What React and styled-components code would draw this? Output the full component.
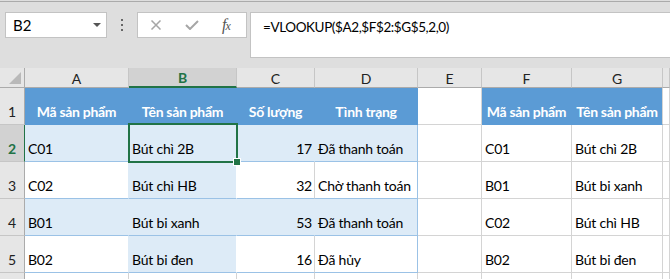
import React from 'react';
import styled, { createGlobalStyle } from 'styled-components';

const GlobalStyle = createGlobalStyle`
    body {
        margin: 0;
        background: #ffffff;
        overflow: hidden;
    }
`;

const FONT = `Lato, "Noto Sans", "Liberation Sans", sans-serif`;

const BLUE = '#5b9bd5';
const LIGHT = '#ddebf7';
const LINE_BLUE = '#9bc2e6';
const GRID = '#d4d4d4';
const GREEN = '#217346';

const Window = styled.div`
    width: 670px;
    height: 279px;
    overflow: hidden;
    font-family: ${FONT};
    color: #000;
`;

const Toolbar = styled.div`
    height: 68px;
    box-sizing: border-box;
    display: flex;
    align-items: flex-start;
    padding: 12px 0 0 5px;
    background: #dedede;
    box-shadow: inset 0 1px #dedede, inset 0 2px #ababab;
`;

const NameBox = styled.div`
    width: 102px;
    height: 26px;
    box-sizing: border-box;
    background: #fff;
    border: 1px solid #c3c3c3;
    display: flex;
    align-items: center;
    justify-content: space-between;
    padding: 0 5px 0 7px;
    font-size: 15px;
`;

const Caret = styled.span`
    width: 0;
    height: 0;
    border-left: 4px solid transparent;
    border-right: 4px solid transparent;
    border-top: 4px solid #555;
`;

const Grip = styled.div`
    width: 30px;
    height: 26px;
    display: flex;
    flex-direction: column;
    align-items: center;
    justify-content: center;
    gap: 3px;
`;

const Dot = styled.span`
    width: 2px;
    height: 2px;
    background: #666;
`;

const ButtonBox = styled.div`
    width: 110px;
    height: 26px;
    box-sizing: border-box;
    background: #fff;
    border: 1px solid #c3c3c3;
    display: flex;
    align-items: center;
    padding-left: 12px;
    gap: 23px;
`;

const Fx = styled.span`
    font-family: "Liberation Serif", "DejaVu Serif", serif;
    font-style: italic;
    font-size: 16px;
    color: #555;
    letter-spacing: -1px;

    small {
        font-size: 12px;
    }
`;

const FormulaBox = styled.div`
    flex: 1;
    margin-left: 3px;
    height: 46px;
    box-sizing: border-box;
    background: #fff;
    border: 1px solid #c3c3c3;
    border-right: none;
    padding: 5px 0 0 12px;
    font-size: 13.5px;
    letter-spacing: -0.4px;
    line-height: 18px;
`;

const Sheet = styled.div`
    position: relative;
    display: grid;
    grid-template-columns: 25px 104px 108px 78px 103px 64px 90px 91px 1fr;
    grid-template-rows: 20px repeat(6, 37px);
`;

const Corner = styled.div`
    background: #e6e6e6;
    border-right: 1px solid #ababab;
    border-bottom: 1px solid #ababab;
    box-sizing: border-box;
    position: relative;

    &::after {
        content: '';
        position: absolute;
        right: 3px;
        bottom: 3px;
        border-left: 12px solid transparent;
        border-bottom: 12px solid #b9b9b9;
    }
`;

const ColHead = styled.div`
    box-sizing: border-box;
    background: ${p => (p.$active ? '#d2d2d2' : '#e6e6e6')};
    border-right: 1px solid #c6c6c6;
    border-bottom: ${p => (p.$active ? `2px solid ${GREEN}` : '1px solid #ababab')};
    color: ${p => (p.$active ? GREEN : '#222')};
    font-weight: ${p => (p.$active ? 700 : 400)};
    font-size: 14px;
    display: flex;
    align-items: center;
    justify-content: center;
    padding-top: 1px;
`;

const RowHead = styled.div`
    box-sizing: border-box;
    background: ${p => (p.$active ? '#d2d2d2' : '#e6e6e6')};
    border-right: 1px solid ${p => (p.$active ? GREEN : '#ababab')};
    border-bottom: 1px solid #c6c6c6;
    color: ${p => (p.$active ? GREEN : '#222')};
    font-weight: ${p => (p.$active ? 700 : 400)};
    font-size: 14px;
    display: flex;
    align-items: flex-end;
    justify-content: center;
    padding-bottom: 4px;
`;

const Cell = styled.div`
    box-sizing: border-box;
    background: ${p => p.$fill || '#fff'};
    border-right: 1px solid ${p => p.$right || GRID};
    border-bottom: 1px solid ${p => p.$bottom || GRID};
    color: ${p => (p.$head ? '#fff' : '#000')};
    font-weight: ${p => (p.$head ? 700 : 400)};
    font-size: 14px;
    letter-spacing: ${p => (p.$head ? '-0.3px' : '-0.2px')};
    white-space: nowrap;
    overflow: hidden;
    display: flex;
    align-items: flex-end;
    justify-content: ${p => (p.$align === 'right' ? 'flex-end' : p.$align === 'center' ? 'center' : 'flex-start')};
    padding: 0 ${p => (p.$align === 'right' ? '2px' : '3px')} 4px 3px;
`;

const Selection = styled.div`
    position: absolute;
    left: 128px;
    top: 55px;
    width: 110px;
    height: 40px;
    box-sizing: border-box;
    border: 2px solid ${GREEN};
    pointer-events: none;
`;

const Handle = styled.span`
    position: absolute;
    right: -5px;
    bottom: -5px;
    width: 6px;
    height: 6px;
    background: ${GREEN};
    border: 1px solid #fff;
`;

const table = [
    ['C01', 'Bút chì 2B', '17', 'Đã thanh toán'],
    ['C02', 'Bút chì HB', '32', 'Chờ thanh toán'],
    ['B01', 'Bút bi xanh', '53', 'Đã thanh toán'],
    ['B02', 'Bút bi đen', '16', 'Đã hủy'],
];

const lookup = [
    ['C01', 'Bút chì 2B'],
    ['B01', 'Bút bi xanh'],
    ['C02', 'Bút chì HB'],
    ['B02', 'Bút bi đen'],
];

const headers = ['Mã sản phẩm', 'Tên sản phẩm', 'Số lượng', 'Tình trạng'];
const cols = ['A', 'B', 'C', 'D', 'E', 'F', 'G', ''];

const CrossIcon = () => (
    <svg width="12" height="10" viewBox="0 0 12 10">
        <path d="M1.5 0.5 L10.5 9.5 M10.5 0.5 L1.5 9.5" stroke="#a6a6a6" strokeWidth="1.5" fill="none" />
    </svg>
);

const CheckIcon = () => (
    <svg width="14" height="10" viewBox="0 0 14 10">
        <path d="M1 5 L5 9 L13 1" stroke="#a6a6a6" strokeWidth="2" fill="none" />
    </svg>
);

const App = () => {
    return (
        <Window>
            <GlobalStyle />
            <Toolbar>
                <NameBox>
                    B2
                    <Caret />
                </NameBox>
                <Grip>
                    <Dot />
                    <Dot />
                    <Dot />
                </Grip>
                <ButtonBox>
                    <CrossIcon />
                    <CheckIcon />
                    <Fx>f<small>x</small></Fx>
                </ButtonBox>
                <FormulaBox>=VLOOKUP($A2,$F$2:$G$5,2,0)</FormulaBox>
            </Toolbar>

            <Sheet>
                <Corner />
                {cols.map((c, i) => (
                    <ColHead key={i} $active={c === 'B'}>{c}</ColHead>
                ))}

                {/* row 1: headers */}
                <RowHead>1</RowHead>
                {headers.map(h => (
                    <Cell key={h} $head $fill={BLUE} $right={BLUE} $bottom={BLUE} $align="center">{h}</Cell>
                ))}
                <Cell />
                <Cell $head $fill={BLUE} $right={BLUE} $bottom={BLUE} $align="center">Mã sản phẩm</Cell>
                <Cell $head $fill={BLUE} $right={GRID} $bottom={BLUE} $align="center">Tên sản phẩm</Cell>
                <Cell />

                {table.map((row, r) => {
                    const banded = r % 2 === 0;
                    const fill = banded ? LIGHT : '#fff';
                    return (
                        <React.Fragment key={r}>
                            <RowHead $active={r === 0}>{r + 2}</RowHead>
                            <Cell $fill={fill} $right={LIGHT} $bottom={LINE_BLUE}>{row[0]}</Cell>
                            <Cell $fill={LIGHT} $right={fill === LIGHT ? LIGHT : '#fff'} $bottom={LINE_BLUE}>{row[1]}</Cell>
                            <Cell $fill={fill} $right={banded ? LIGHT : GRID} $bottom={LINE_BLUE} $align="right">{row[2]}</Cell>
                            <Cell $fill={fill} $right={LINE_BLUE} $bottom={LINE_BLUE}>{row[3]}</Cell>
                            <Cell />
                            <Cell>{lookup[r][0]}</Cell>
                            <Cell>{lookup[r][1]}</Cell>
                            <Cell />
                        </React.Fragment>
                    );
                })}

                {/* row 6: only its top edge is in view */}
                <RowHead />
                {cols.map((c, i) => (
                    <Cell key={i} />
                ))}

                <Selection>
                    <Handle />
                </Selection>
            </Sheet>
        </Window>
    );
};

export default App;
